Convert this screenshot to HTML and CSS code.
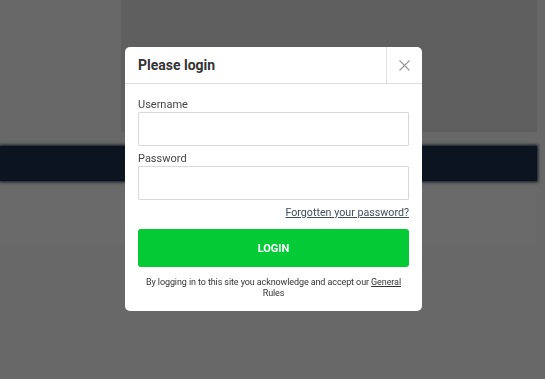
FILE: index.html
```html
<!DOCTYPE html>
<html>
<head>
<meta charset="utf-8">
<link rel="stylesheet" href="styles.css">
</head>
<body>
<div class="page">
  <div class="panel"></div>
  <div class="navbar"></div>
  <div class="lower"></div>
</div>
<div class="modal">
  <div class="modal-head">
    <h2 class="title">Please login</h2>
    <button class="close" aria-label="Close">
      <svg width="11" height="11" viewBox="0 0 11 11"><path d="M0.5 0.5L10.5 10.5M10.5 0.5L0.5 10.5" stroke="#9a9a9a" stroke-width="1.2" fill="none"/></svg>
    </button>
  </div>
  <div class="modal-body">
    <label class="label">Username</label>
    <input class="field" type="text">
    <label class="label label-gap">Password</label>
    <input class="field" type="password">
    <div class="forgot-row"><a class="forgot" href="#">Forgotten your password?</a></div>
    <button class="login">LOGIN</button>
    <p class="terms">By logging in to this site you acknowledge and accept our <a href="#">General</a> Rules</p>
  </div>
</div>
</body>
</html>
```
FILE: styles.css
```css
html, body {
  margin: 0;
  padding: 0;
}
body {
  width: 545px;
  height: 379px;
  background: #686868;
  overflow: hidden;
  font-family: Roboto, "Liberation Sans", sans-serif;
}
.page {
  display: flex;
  flex-direction: column;
}
.panel {
  margin-left: 121px;
  width: 416px;
  height: 132px;
  background: #5f5f5f;
}
.navbar {
  margin-top: 14px;
  width: 537px;
  height: 35px;
  background: #0c1420;
  box-shadow: 0 0 3px 1px #0c1420;
}
.lower {
  margin-top: 6px;
  width: 537px;
  height: 58px;
  background: #6a6a6a;
}
.modal {
  position: fixed;
  left: 125px;
  top: 47px;
  width: 297px;
  background: #fff;
  border-radius: 5px;
  display: flex;
  flex-direction: column;
}
.modal-head {
  display: flex;
  height: 36px;
  border-bottom: 1px solid #dedede;
}
.title {
  flex: 1;
  margin: 0;
  padding-left: 13px;
  font-size: 14px;
  font-weight: 700;
  color: #333;
  line-height: 36px;
}
.close {
  width: 36px;
  border: 0;
  border-left: 1px solid #e2e2e2;
  background: transparent;
  padding: 0;
  display: flex;
  align-items: center;
  justify-content: center;
}
.modal-body {
  display: flex;
  flex-direction: column;
  padding: 14px 13px 12px 13px;
}
.label {
  font-size: 11px;
  line-height: 13px;
  color: #444;
  margin-bottom: 1px;
}
.label-gap {
  margin-top: 6px;
}
.field {
  box-sizing: border-box;
  height: 34px;
  margin: 0;
  border: 1px solid #d9d9d9;
  border-radius: 1px;
  background: #fff;
}
.forgot-row {
  display: flex;
  justify-content: flex-end;
  margin-top: 6px;
  font-size: 10.7px;
  line-height: 13px;
}
.forgot {
  color: #3e4d5c;
  text-decoration: underline;
}
.login {
  margin-top: 10px;
  height: 38px;
  border: 0;
  border-radius: 3px;
  background: #02cb35;
  color: #fff;
  font-family: Roboto, "Liberation Sans", sans-serif;
  font-weight: 700;
  font-size: 11px;
}
.terms {
  margin: 10px 0 0 0;
  font-size: 9px;
  line-height: 11px;
  color: #333;
  text-align: center;
  padding: 0;
  letter-spacing: -0.1px;
}
.terms a {
  color: #333;
  text-decoration: underline;
}
```
